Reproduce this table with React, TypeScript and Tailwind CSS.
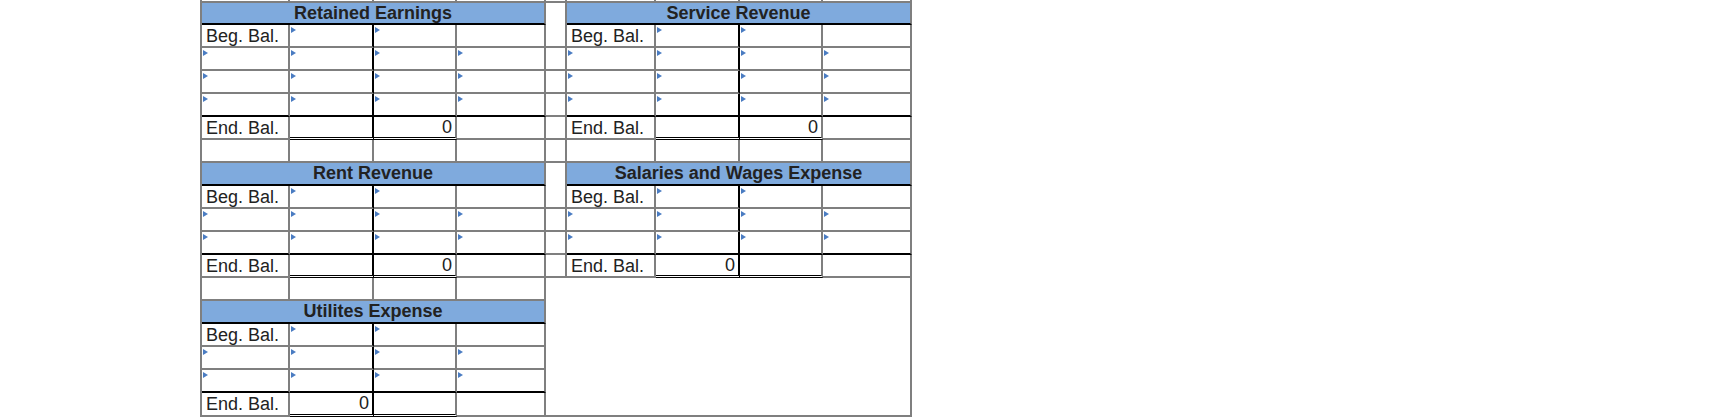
import type { ReactNode } from "react";
import clsx from "clsx";

// T-account worksheet grid (spreadsheet style)

function Tri() {
  return (
    <svg className="absolute left-px top-[2px]" width="5" height="6" viewBox="0 0 5 6">
      <polygon points="0,0 5,3 0,6" fill="#4a7cc2" />
    </svg>
  );
}

type CellProps = {
  tri?: boolean;
  blackR?: boolean;
  blackB?: boolean;
  double?: boolean;
  className?: string;
  children?: ReactNode;
};

function Cell({ tri, blackR, blackB, double, className, children }: CellProps) {
  return (
    <div
      className={clsx(
        "relative border-r-2",
        blackR ? "border-r-black" : "border-r-[#7f7f7f]",
        double
          ? "border-b-[3px] border-b-black [border-bottom-style:double]"
          : "border-b-2",
        !double && (blackB ? "border-b-black" : "border-b-[#7f7f7f]"),
        className
      )}
    >
      {tri && <Tri />}
      {children}
    </div>
  );
}

const label = "pl-1 text-[18px] leading-[22px] text-[#222] whitespace-nowrap";
const value = "pr-[3px] text-right text-[18px] leading-[20px] text-[#222]";

function Header({ title }: { title: string }) {
  return (
    <div className="col-span-4 border-r-2 border-r-[#7f7f7f] border-b-2 border-b-black bg-[#7faadd] text-center text-[18px] leading-[20px] font-bold text-[#222] whitespace-nowrap">
      {title}
    </div>
  );
}

function Empty() {
  return (
    <>
      <Cell />
      <Cell />
      <Cell />
      <Cell />
    </>
  );
}

function Beg() {
  return (
    <>
      <Cell>
        <div className={label}>Beg. Bal.</div>
      </Cell>
      <Cell tri blackR />
      <Cell tri />
      <Cell />
    </>
  );
}

function Blank({ last }: { last?: boolean }) {
  return (
    <>
      <Cell tri blackB={last} />
      <Cell tri blackR blackB={last} />
      <Cell tri blackB={last} />
      <Cell tri blackB={last} />
    </>
  );
}

function End({ side }: { side: "dr" | "cr" }) {
  return (
    <>
      <Cell>
        <div className={label}>End. Bal.</div>
      </Cell>
      <Cell blackR double>
        {side === "dr" && <div className={value}>0</div>}
      </Cell>
      <Cell double>{side === "cr" && <div className={value}>0</div>}</Cell>
      <Cell />
    </>
  );
}

function Gap({ span }: { span?: boolean }) {
  return <Cell className={span ? "row-span-2" : undefined} />;
}

export default function App() {
  return (
    <div className="h-[418px] w-[1716px] overflow-hidden bg-white font-['Liberation_Sans',Arial,sans-serif]">
      <div className="ml-[200px] grid w-max grid-cols-[88px_84px_83px_89px_21px_89px_84px_83px_89px] grid-rows-[3px_22px_23px_23px_23px_23px_23px_23px_23px_23px_23px_23px_23px_23px_23px_23px_23px_23px_24px] border-l-2 border-l-[#7f7f7f]">
        {/* top sliver of previous row */}
        <Empty />
        <Gap />
        <Empty />

        <Header title="Retained Earnings" />
        <Gap span />
        <Header title="Service Revenue" />

        <Beg />
        <Beg />

        <Blank />
        <Gap />
        <Blank />

        <Blank />
        <Gap />
        <Blank />

        <Blank last />
        <Gap />
        <Blank last />

        <End side="cr" />
        <Gap />
        <End side="cr" />

        <Empty />
        <Gap />
        <Empty />

        <Header title="Rent Revenue" />
        <Gap span />
        <Header title="Salaries and Wages Expense" />

        <Beg />
        <Beg />

        <Blank />
        <Gap />
        <Blank />

        <Blank last />
        <Gap />
        <Blank last />

        <End side="cr" />
        <Gap />
        <End side="dr" />

        <Empty />
        <div className="col-span-5 row-span-6 border-r-2 border-b-2 border-[#7f7f7f]" />

        <Header title="Utilites Expense" />
        <Beg />
        <Blank />
        <Blank last />
        <End side="dr" />
      </div>
    </div>
  );
}
